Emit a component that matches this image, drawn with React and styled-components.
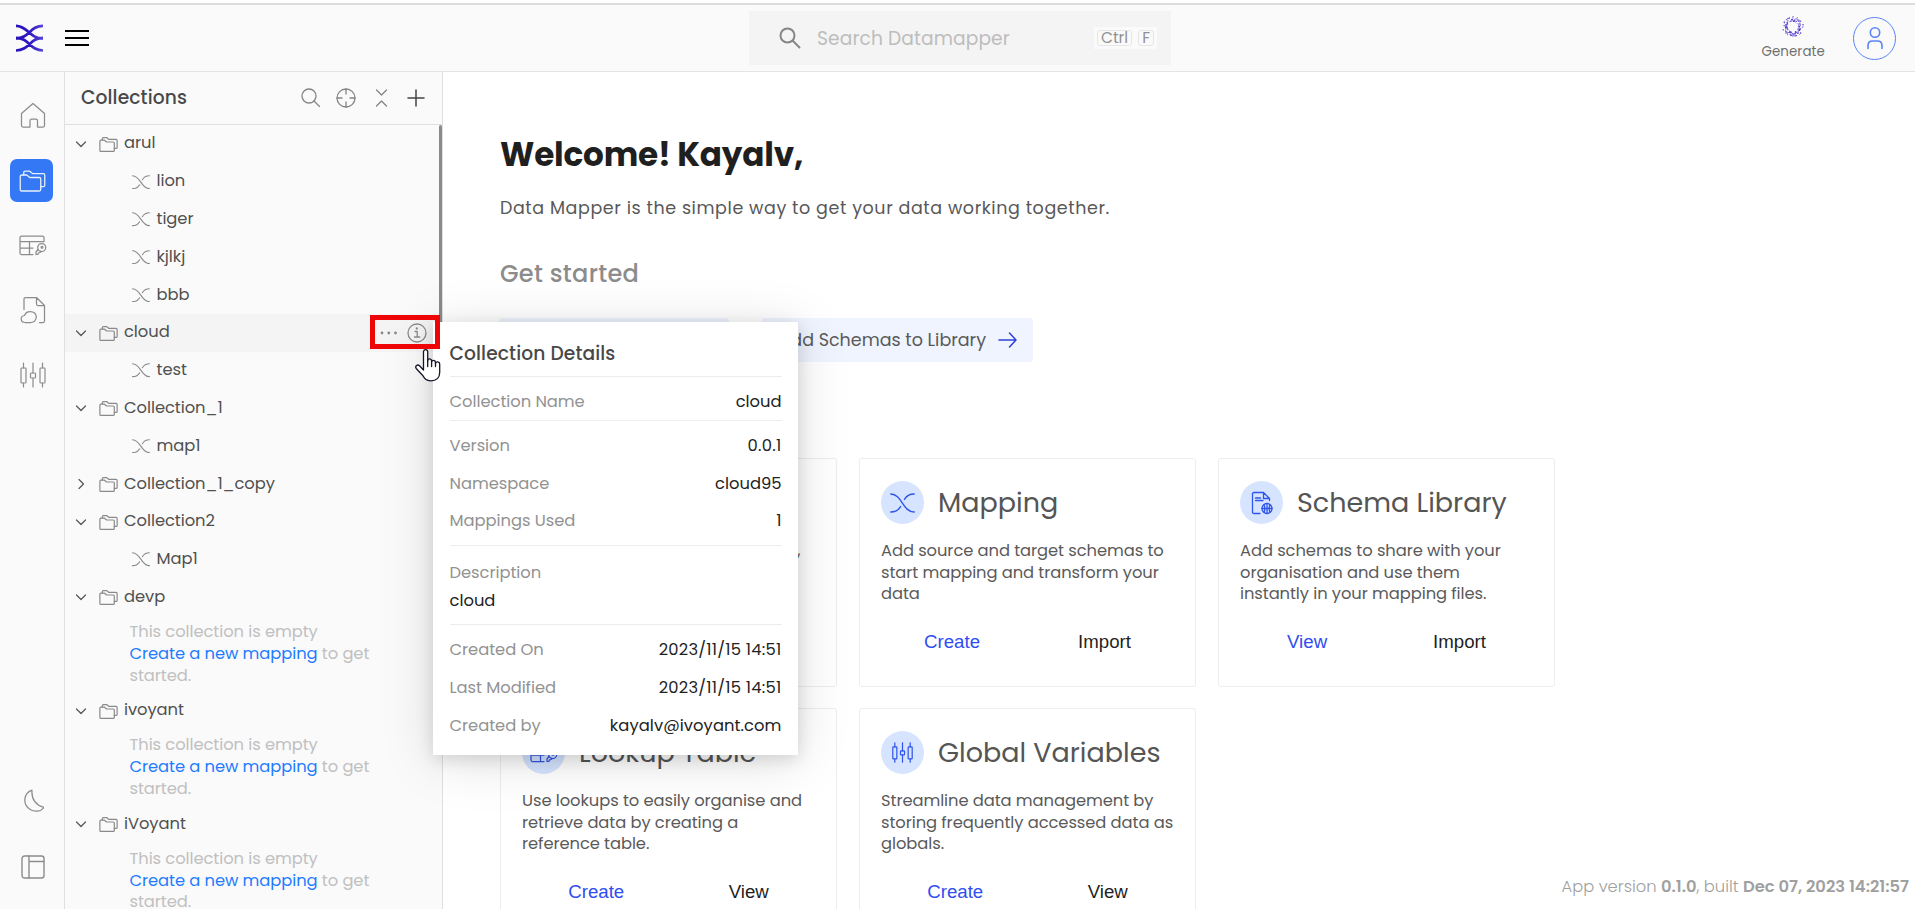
import React from 'react';
import styled, { createGlobalStyle } from 'styled-components';

const Global = createGlobalStyle`
  * { box-sizing: border-box; }
  body { margin: 0; background: #fff; font-family: Poppins, Inter, sans-serif; color: #555; overflow: hidden; }
  svg { display: block; flex: none; }
  p, h1, h2, h3 { margin: 0; font-weight: 400; }
`;

const Svg = ({ w = 24, h = w, box, sw = 1, children, ...rest }) => (
  <svg width={w} height={h} viewBox={box || `0 0 ${w} ${h}`} fill="none" stroke="currentColor"
    strokeWidth={sw} strokeLinecap="round" strokeLinejoin="round" {...rest}>{children}</svg>
);

const Page = styled.div`
  height: 909px;
  display: flex;
  flex-direction: column;
  padding-top: 3px;
  position: relative;
  overflow: hidden;
`;
const Header = styled.header`
  height: 69px;
  flex: none;
  display: flex;
  align-items: center;
  background: #fafafa;
  border-top: 2px solid #dcdcdc;
  border-bottom: 1px solid #e4e4e4;
  padding: 0 19px 0 16px;
`;
const Brand = styled.div`
  display: flex;
  align-items: center;
  gap: 22px;
  width: 733px;
`;
const SearchBox = styled.div`
  width: 422px;
  height: 54px;
  background: #f4f4f4;
  display: flex;
  align-items: center;
  padding: 0 14px 0 30px;
  color: #858585;
`;
const SearchHint = styled.span`
  flex: 1;
  padding-left: 16px;
  font-size: 18.67px;
  letter-spacing: 0.1px;
  color: #bdbdbd;
`;
const Keys = styled.span`
  height: 22px;
  display: flex;
  align-items: center;
  gap: 6px;
  padding: 0 3px;
  background: #fafafa;
`;
const Key = styled.kbd`
  height: 16px;
  line-height: 14px;
  padding: 0 3px;
  border: 1px solid #e6e6e6;
  border-radius: 3px;
  font-family: inherit;
  font-size: 15.5px;
  color: #929292;
`;
const HeaderRight = styled.div`
  margin-left: auto;
  display: flex;
  align-items: center;
  gap: 28px;
`;
const Generate = styled.div`
  display: flex;
  flex-direction: column;
  align-items: center;
  gap: 5px;
  height: 45px;
  font-size: 13.4px;
  line-height: 18px;
  letter-spacing: 0.1px;
  color: #707070;
`;
const Avatar = styled.div`
  width: 43px;
  height: 43px;
  border: 1.5px solid #5b84f7;
  border-radius: 50%;
  color: #5b84f7;
  display: flex;
  align-items: center;
  justify-content: center;
`;

const Body = styled.div`
  flex: 1;
  min-height: 0;
  display: flex;
`;
const Rail = styled.nav`
  width: 65px;
  flex: none;
  display: flex;
  flex-direction: column;
  align-items: center;
  justify-content: space-between;
  background: #fafafa;
  border-right: 1px solid #e0e0e0;
  padding: 22px 1px 20px 0;
  color: #8c8c8c;
`;
const RailGroup = styled.div`
  display: flex;
  flex-direction: column;
  gap: ${p => p.$gap}px;
`;
const RailItem = styled.div`
  width: 43px;
  height: 43px;
  border-radius: 7px;
  display: flex;
  align-items: center;
  justify-content: center;
  padding: 0 0 1px 2px;
  ${p => p.$active && 'background: #3478f6; color: #e8f0ff;'}
`;

const Panel = styled.aside`
  width: 378px;
  flex: none;
  display: flex;
  flex-direction: column;
  background: #fafafa;
  border-right: 1px solid #e0e0e0;
`;
const PanelHead = styled.div`
  height: 53px;
  flex: none;
  display: flex;
  align-items: center;
  justify-content: space-between;
  border-bottom: 1px solid #e0e0e0;
  padding: 0 17px 1px 16px;
`;
const PanelTitle = styled.h3`
  font-size: 18.67px;
  font-weight: 500;
  letter-spacing: 0.12px;
  color: #484848;
`;
const PanelTools = styled.div`
  display: flex;
  align-items: center;
  gap: 16.5px;
  color: #858585;
`;
const Tree = styled.div`
  flex: 1;
  min-height: 0;
  overflow: hidden;
  display: grid;
  grid-template-columns: 1fr 3px;
`;
const Thumb = styled.div`
  height: 240px;
  background: #8a8a8a;
  border-radius: 2px;
`;
const Row = styled.div`
  height: 37.8px;
  display: flex;
  align-items: center;
  padding: 0 12.5px 0 ${p => (p.$child ? 66.5 : 10)}px;
  background: ${p => (p.$hover ? '#f4f4f4' : 'transparent')};
  color: #8a8a8a;
`;
const RowIcon = styled.span`
  margin-left: ${p => (p.$child ? 0 : 12)}px;
  margin-right: ${p => (p.$child ? 7 : 6)}px;
`;
const RowText = styled.span`
  flex: 1;
  font-size: 16.33px;
  letter-spacing: -0.05px;
  position: relative;
  top: -1px;
  color: #505050;
`;
const RowTools = styled.span`
  display: flex;
  align-items: center;
  gap: 9px;
`;
const Empty = styled.p`
  height: 75.6px;
  padding: 4.6px 0 0 64.5px;
  font-size: 16.33px;
  line-height: 21.8px;
  letter-spacing: -0.07px;
  color: #c0c0c0;
  white-space: pre-line;
`;
const EmptyLink = styled.span`
  color: #1f7cff;
`;

const Main = styled.main`
  flex: 1;
  min-width: 0;
  padding: 62.5px 0 0 57px;
  display: flex;
  flex-direction: column;
`;
const Welcome = styled.h1`
  font-size: 32.67px;
  line-height: 40px;
  font-weight: 700;
  letter-spacing: -0.2px;
  color: #1f1f1f;
`;
const Lead = styled.p`
  margin-top: 19.5px;
  font-size: 17.5px;
  line-height: 28px;
  letter-spacing: 0.58px;
  color: #585858;
`;
const Section = styled.h2`
  margin-top: 35px;
  font-size: 24px;
  line-height: 34px;
  font-weight: 500;
  letter-spacing: 0.3px;
  color: #8c8c8c;
`;
const Quick = styled.div`
  display: flex;
  gap: 33px;
  margin: 27px 0 0 -1px;
`;
const QuickButton = styled.div`
  width: ${p => p.$w}px;
  height: 44px;
  border-radius: 3px;
  background: #eff4ff;
  display: flex;
  align-items: center;
  justify-content: flex-end;
  gap: 12px;
  padding-right: 16px;
  font-size: 17.5px;
  white-space: nowrap;
  color: #5a5a5a;
`;
const Arrow = styled.span`
  color: #2c41d8;
`;
const Cards = styled.div`
  display: grid;
  grid-template-columns: repeat(3, 337px);
  grid-auto-rows: 229px;
  gap: 21px 22px;
  margin-top: 96px;
`;
const Card = styled.section`
  border: 1px solid #ededed;
  border-radius: 3px;
  padding: 22px 10px 0 21px;
  display: flex;
  flex-direction: column;
`;
const CardHead = styled.div`
  display: flex;
  align-items: center;
  gap: 14px;
`;
const Badge = styled.span`
  width: 43px;
  height: 43px;
  border-radius: 50%;
  background: #d6e4ff;
  color: #2f54eb;
  display: flex;
  align-items: center;
  justify-content: center;
`;
const CardTitle = styled.h3`
  font-size: 27px;
  font-weight: 400;
  color: #555;
`;
const CardText = styled.p`
  margin-top: 16px;
  font-size: 16.33px;
  line-height: 21.7px;
  letter-spacing: ${p => p.$ls || -0.07}px;
  color: #5a5a5a;
  white-space: pre-line;
`;
const CardLinks = styled.div`
  display: flex;
  justify-content: space-around;
  margin: 26px 5px 0 -6px;
  font: 18.67px/22px "Liberation Sans", Arial, sans-serif;
`;
const CardLink = styled.span`
  color: ${p => (p.$primary ? '#2f4df0' : '#1f1f1f')};
`;
const Version = styled.div`
  position: absolute;
  right: 6px;
  bottom: 10px;
  font-size: 16.33px;
  line-height: 24px;
  font-weight: 300;
  color: #a0a0a0;
  b { font-weight: 600; }
`;

const Popup = styled.div`
  position: absolute;
  left: 433px;
  top: 322px;
  width: 365px;
  height: 433px;
  padding: 15px 16.5px 0 16.5px;
  background: #fff;
  box-shadow: 0 4px 16px rgba(0, 0, 0, 0.13), 0 6px 50px rgba(0, 0, 0, 0.13);
`;
const PopupTitle = styled.h3`
  height: 40px;
  line-height: 34px;
  border-bottom: 1px solid #ededed;
  font-size: 18.67px;
  font-weight: 500;
  letter-spacing: 0.12px;
  color: #484848;
`;
const Group = styled.div`
  border-bottom: ${p => (p.$last ? 0 : 1)}px solid #ededed;
  padding: ${p => p.$pad} 0 0;
`;
const Field = styled.div`
  display: flex;
  justify-content: space-between;
  height: ${p => p.$h || 37.8}px;
  align-items: flex-start;
  line-height: 24px;
  font-size: 16.33px;
`;
const Label = styled.span`
  color: #929292;
  letter-spacing: -0.04px;
`;
const Value = styled.span`
  color: #222;
  letter-spacing: ${p => p.$ls || 0}px;
`;
const Highlight = styled.div`
  position: absolute;
  left: 370px;
  top: 315px;
  width: 70px;
  height: 34px;
  border: 5px solid #ee0505;
`;
const Pointer = styled.div`
  position: absolute;
  left: 414px;
  top: 348px;
`;

const Folders = ({ w = 27, sw = 1.2 }) => (
  <Svg w={w} h={w * 23 / 27} box="0 0 26.5 23" sw={sw}>
    <path d="M1 7.5q0-1.5 1.5-1.5h5l3 2.5h9.5q1.5 0 1.5 1.5v10.5q0 1.5-1.5 1.5h-17.5q-1.5 0-1.5-1.5z" />
    <path d="M4.5 6v-2.300q0-1.500 1.500-1.500h4.500l3 2.500h10.500q1.500 0 1.500 1.500v10q0 1.500-1.500 1.500h-2.500" />
  </Svg>
);
const MapIcon = ({ w = 18, sw = 1.1 }) => (
  <Svg w={w} h={w * 0.8} box="0 0 25 20" sw={sw * 25 / w}>
    <path d="M.8 1C12 1 12.500 19 24.200 19M24.200 1c-5 0-8 2.200-9.800 5.500M.8 19c5 0 8-2.200 9.800-5.500" />
  </Svg>
);
const TableKey = () => (
  <Svg w={28} h={21} sw={1.25}>
    <path d="M14 19.500H2.500Q1 19.500 1 18V2.500Q1 1 2.500 1h21Q25 1 25 2.500V6.500H1M1 13h13M10.500 6.500v13" />
    <circle cx="22.700" cy="12.500" r="4" /><circle cx="23" cy="12.200" r=".9" />
    <path d="M19 14.500l-2 2.500v2.500l2-.2.500-1.500 1.700-.3.300-1.300" />
  </Svg>
);
const Sliders = ({ w = 26, sw = 1.2 }) => (
  <Svg w={w} box="0 0 26 26" sw={sw}>
    <rect x="1" y="6" width="5" height="15" rx=".8" /><rect x="10.500" y="11" width="5" height="5" rx=".8" /><rect x="20" y="6" width="5" height="15" rx=".8" />
    <path d="M3.500 1v5M3.500 21v4M13 1v10M13 16v9M22.500 1v5M22.500 21v4" />
  </Svg>
);
const SchemaDoc = () => (
  <Svg w={22} h={24} sw={1.3}>
    <path d="M9 22.500H3Q1.500 22.500 1.500 21V3Q1.500 1.500 3 1.500h9.500l6 6v2M12.500 1.500v6h6M4.500 7h5M4.500 9.500h7.500" />
    <circle cx="16" cy="17.500" r="5" /><path d="M16 12.500v10M11 17.500h10M13 13.800q1.700 3.700 0 7.400M19 13.800q-1.700 3.700 0 7.400" />
  </Svg>
);
const Chevron = ({ open = true }) => (
  <Svg w={12} sw={1.2} color="#555"><path d={open ? 'M1.500 4l4.500 4.500L10.500 4' : 'M4 1.500L8.500 6 4 10.500'} /></Svg>
);

// Scattered particles forming the ring of the Generate icon.
const frac = v => v - Math.floor(v);
const dots = Array.from({ length: 130 }, (_, i) => {
  const a = i * 2.39996;
  const r = 5.3 + frac(Math.sin(i * 12.9898) * 43758.5453) * 5;
  return [11 + r * Math.cos(a), 11 + r * Math.sin(a), 0.35 + frac(Math.sin(i * 78.233) * 9631.7) * 0.4];
});

const tree = [
  { name: 'arul', kids: ['lion', 'tiger', 'kjlkj', 'bbb'] },
  { name: 'cloud', kids: ['test'], hover: true },
  { name: 'Collection_1', kids: ['map1'] },
  { name: 'Collection_1_copy', kids: [], closed: true },
  { name: 'Collection2', kids: ['Map1'] },
  { name: 'devp' },
  { name: 'ivoyant' },
  { name: 'iVoyant' },
];

const cards = [
  { title: 'Collections', icon: <Folders w={25} />, text: 'Organise your mapping files easily,\ncreate collections and group\nthem in one place.', ls: -0.2, links: ['Create', 'Import'] },
  { title: 'Mapping', icon: <MapIcon w={25} sw={1.4} />, text: 'Add source and target schemas to\nstart mapping and transform your\ndata', links: ['Create', 'Import'] },
  { title: 'Schema Library', icon: <SchemaDoc />, text: 'Add schemas to share with your\norganisation and use them\ninstantly in your mapping files.', links: ['View', 'Import'] },
  { title: 'Lookup Table', icon: <TableKey />, text: 'Use lookups to easily organise and\nretrieve data by creating a\nreference table.', links: ['Create', 'View'] },
  { title: 'Global Variables', icon: <Sliders w={21} sw={1.5} />, text: 'Streamline data management by\nstoring frequently accessed data as\nglobals.', links: ['Create', 'View'] },
];

const ArrowIcon = () => (
  <Arrow><Svg w={19} h={20} sw={1.5}><path d="M1 10h17M11.500 3l6.500 7-6.500 7" /></Svg></Arrow>
);

export default function App() {
  return (
    <Page>
      <Global />
      <Header>
        <Brand>
          <Svg w={27} h={28} sw={2.7} strokeLinecap="butt">
            <defs>
              <linearGradient id="lg" x1="0" y1="0" x2="27" y2="0" gradientUnits="userSpaceOnUse">
                <stop stopColor="#2812b8" /><stop offset=".5" stopColor="#2f18c4" /><stop offset="1" stopColor="#5546d6" />
              </linearGradient>
            </defs>
            <g stroke="url(#lg)">
              <path d="M0 1.800C12 1.800 13 14.500 27 14.500M27 1.800C14 1.800 13 14.500 0 14.500" />
              <path d="M0 13.800C13 13.800 14 26.500 27 26.500M27 13.800C14 13.800 13 26.500 0 26.500" />
            </g>
          </Svg>
          <Svg w={24} h={18} sw={2} strokeLinecap="butt" color="#000"><path d="M0 2h24M0 9h24M0 16h24" /></Svg>
        </Brand>
        <SearchBox>
          <Svg w={22} sw={2} strokeLinecap="butt"><circle cx="8.500" cy="8.500" r="7" /><path d="M13.500 13.500l7.500 7.500" /></Svg>
          <SearchHint>Search Datamapper</SearchHint>
          <Keys><Key>Ctrl</Key><Key>F</Key></Keys>
        </SearchBox>
        <HeaderRight>
          <Generate>
            <svg width="22" height="22" fill="#4a2fc9">{dots.map(([x, y, r], i) => <circle key={i} cx={x} cy={y} r={r} />)}</svg>
            Generate
          </Generate>
          <Avatar>
            <Svg w={18} h={24} sw={1.6}><circle cx="9" cy="6.500" r="4.700" /><path d="M2 22.500v-3q0-4.500 4.500-4.500h5q4.500 0 4.500 4.500v3" /></Svg>
          </Avatar>
        </HeaderRight>
      </Header>
      <Body>
        <Rail>
          <RailGroup $gap={22}>
            <RailItem>
              <Svg w={26} sw={1.25}><path d="M1.500 11.500L13 1.500l11.500 10v12q0 1.500-1.500 1.500h-5.500v-6.500q0-1.500-1.500-1.500h-4.500q-1.500 0-1.500 1.500v6.500H3q-1.500 0-1.500-1.500z" /></Svg>
            </RailItem>
            <RailItem $active><Folders w={27} sw={1.3} /></RailItem>
            <RailItem><TableKey /></RailItem>
            <RailItem>
              <Svg w={26} h={28} sw={1.25}><path d="M4 13.500V3Q4 1.500 5.500 1.500h11l8 8V25q0 1.500-1.500 1.500h-3.500M16.500 1.500v6.500q0 1.500 1.500 1.500h6.500M5 26.500q-3.800-.2-3.800-3.500 0-3 3.300-3.500 1.300-4 5.500-4 6 0 6.300 5.500-.3 5-5.300 5.500z" /></Svg>
            </RailItem>
            <RailItem><Sliders /></RailItem>
          </RailGroup>
          <RailGroup $gap={24}>
            <RailItem>
              <Svg w={22} h={23} sw={1.25}><path d="M9 1.200c-.8 9.500 4 14.800 12 17.300-3 4.200-9.500 4.800-13.800 2C-.5 15.800 0 4.500 9 1.200z" transform="translate(1 0)" /></Svg>
            </RailItem>
            <RailItem>
              <Svg w={24} sw={1.4}><rect x="1" y="1" width="22" height="22" rx="2.500" /><path d="M8 1v22M8 6.500h15" /></Svg>
            </RailItem>
          </RailGroup>
        </Rail>
        <Panel>
          <PanelHead>
            <PanelTitle>Collections</PanelTitle>
            <PanelTools>
              <Svg w={19} sw={1.3}><circle cx="8" cy="8" r="7" /><path d="M13 13l5.500 5.500" /></Svg>
              <Svg w={20} sw={1.3}><circle cx="10" cy="10" r="9" /><path d="M10 1v5M10 14v5M1 10h5M14 10h5" /></Svg>
              <Svg w={18} h={20} sw={1.3}><path d="M3.500 2l5 5 5-5M3.500 18l5-5 5 5" /></Svg>
              <Svg w={18} sw={1.5} color="#444"><path d="M9 1v16M1 9h16" /></Svg>
            </PanelTools>
          </PanelHead>
          <Tree>
            <div>
              {tree.map(f => (
                <React.Fragment key={f.name}>
                  <Row $hover={f.hover}>
                    <Chevron open={!f.closed} />
                    <RowIcon><Folders w={19} sw={1.7} /></RowIcon>
                    <RowText>{f.name}</RowText>
                    {f.hover && (
                      <RowTools>
                        <Svg w={18} h={4} fill="currentColor" stroke="none"><circle cx="2" cy="2" r="1.400" /><circle cx="8.800" cy="2" r="1.400" /><circle cx="15.500" cy="2" r="1.400" /></Svg>
                        <Svg w={20} sw={1.3}><circle cx="10" cy="10" r="9" /><path d="M8 8.500h2.200v5.500M7.500 14h5.200" /><circle cx="9.800" cy="5.500" r=".5" fill="currentColor" /></Svg>
                      </RowTools>
                    )}
                  </Row>
                  {f.kids && f.kids.map(name => (
                    <Row $child key={name}><RowIcon $child><MapIcon /></RowIcon><RowText>{name}</RowText></Row>
                  ))}
                  {!f.kids && <Empty>{'This collection is empty\n'}<EmptyLink>Create a new mapping</EmptyLink>{' to get\nstarted.'}</Empty>}
                </React.Fragment>
              ))}
            </div>
            <Thumb />
          </Tree>
        </Panel>
        <Main>
          <Welcome>Welcome! Kayalv,</Welcome>
          <Lead>Data Mapper is the simple way to get your data working together.</Lead>
          <Section>Get started</Section>
          <Quick>
            <QuickButton $w={230}>Create Collection<ArrowIcon /></QuickButton>
            <QuickButton $w={271}>Add Schemas to Library<ArrowIcon /></QuickButton>
          </Quick>
          <Cards>
            {cards.map(c => (
              <Card key={c.title}>
                <CardHead><Badge>{c.icon}</Badge><CardTitle>{c.title}</CardTitle></CardHead>
                <CardText $ls={c.ls}>{c.text}</CardText>
                <CardLinks><CardLink $primary>{c.links[0]}</CardLink><CardLink>{c.links[1]}</CardLink></CardLinks>
              </Card>
            ))}
          </Cards>
        </Main>
      </Body>
      <Version>App version <b>0.1.0</b>, built <b>Dec 07, 2023 14:21:57</b></Version>
      <Popup>
        <PopupTitle>Collection Details</PopupTitle>
        <Group $pad="13px"><Field $h={30}><Label>Collection Name</Label><Value>cloud</Value></Field></Group>
        <Group $pad="13px">
          <Field><Label>Version</Label><Value $ls={0.3}>0.0.1</Value></Field>
          <Field $h={37.4}><Label>Namespace</Label><Value>cloud95</Value></Field>
          <Field $h={35.8}><Label>Mappings Used</Label><Value>1</Value></Field>
        </Group>
        <Group $pad="15px"><Field $h={28}><Label>Description</Label></Field><Field $h={35}><Value>cloud</Value></Field></Group>
        <Group $last $pad="13px">
          <Field><Label>Created On</Label><Value $ls={0.24}>2023/11/15 14:51</Value></Field>
          <Field><Label>Last Modified</Label><Value $ls={0.24}>2023/11/15 14:51</Value></Field>
          <Field><Label>Created by</Label><Value $ls={0.08}>kayalv@ivoyant.com</Value></Field>
        </Group>
      </Popup>
      <Highlight />
      <Pointer>
        <Svg w={28} h={34} sw={1.3} color="#15152a">
          <path fill="#fff" d="M9.500 22V3.800c0-3 4.200-3 4.200 0v9c.2-2.600 3.900-2.400 3.900.2v1c.4-2.400 3.900-2.200 3.900.4v1c.5-2.200 4.200-2 4.200.6v8.500c0 5-3.200 8.300-8.700 8.300-5 0-6.600-2.500-8.500-5.600L2.200 20.500c-1.600-2.800 1.500-4.400 3.300-2.700z" />
          <path d="M13.700 12.500v6M17.600 13.500v5M21.500 14.500v4" />
        </Svg>
      </Pointer>
    </Page>
  );
}
